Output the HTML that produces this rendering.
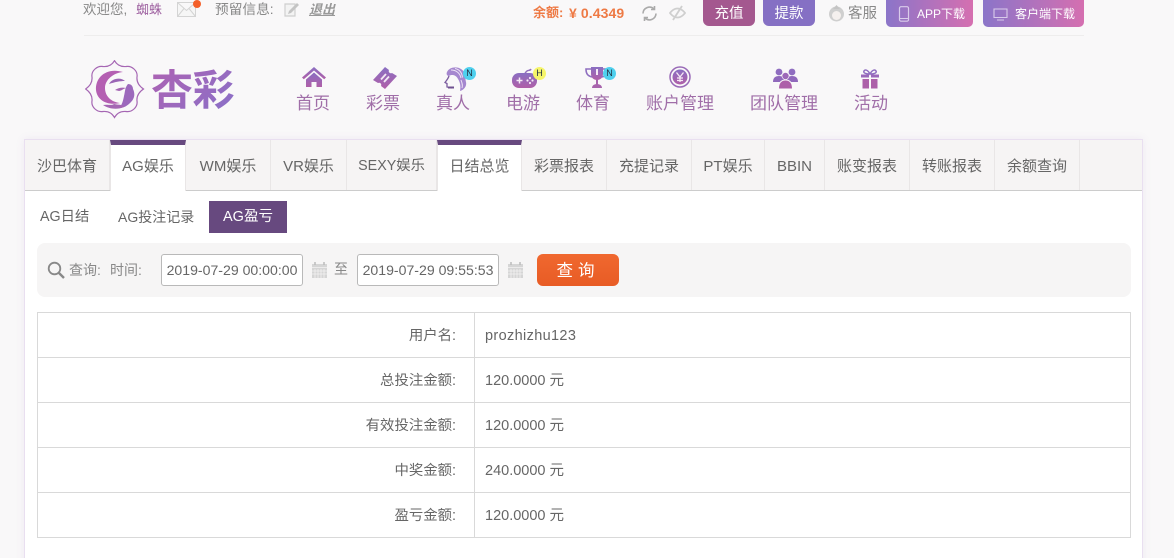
<!DOCTYPE html>
<html lang="zh"><head><meta charset="utf-8"><title>AG盈亏</title>
<style>
*{box-sizing:border-box}
html,body{margin:0;padding:0;width:1174px;height:558px;overflow:hidden}
body{background:#f9f8f9;font-family:"Liberation Sans","Noto Sans CJK SC",sans-serif;color:#666;font-size:14px}
#root{position:relative;width:1174px;height:558px;overflow:hidden;background:#f9f8f9}
.a{position:absolute;white-space:nowrap;line-height:1}
svg{position:absolute;display:block}
.btn{position:absolute;color:#fff;text-align:center;border-radius:5px;font-size:14.5px;white-space:nowrap}
.nav{position:absolute;top:95px;font-size:17px;line-height:18px;color:#a06ea8;text-align:center;white-space:nowrap;transform:translateX(-50%)}
.badge{position:absolute;width:13px;height:13px;border-radius:50%;font-size:9px;line-height:13px;text-align:center;color:#234}
#panel{position:absolute;left:24px;top:139px;width:1119px;height:430px;background:#fff;border:1px solid #e9dff0;box-shadow:0 0 8px rgba(160,120,190,.12)}
#tabs{position:absolute;left:25px;top:140px;width:1117px;height:51px;background:#f6f4f4;border-bottom:1px solid #ccc}
.tab{position:absolute;top:0;height:50px;border-right:1px solid #e9e6e6;line-height:53px;text-align:center;font-size:15px;color:#666;white-space:nowrap}
.tab.on{background:#fff;height:51px;border-top:5px solid #67497f;line-height:43px}
.tr{position:absolute;left:37px;width:1094px;height:45px;border:1px solid #d9d9d9;border-top:0;background:#fff}
.tr b{position:absolute;font-weight:normal;top:15px;line-height:16px;white-space:nowrap}
.tr .l{right:674px;color:#666;font-size:14.4px}
.tr .v{left:447px;color:#666;font-size:14.5px}
.tr i{position:absolute;left:436px;top:0;bottom:0;width:1px;background:#d9d9d9}
.inp{position:absolute;top:254px;width:142px;height:32px;border:1px solid #b9b9b9;border-radius:3px;background:#fff;line-height:31px;text-align:center;font-size:14.100px;color:#666;white-space:nowrap}
</style></head><body><div id="root">

<div class="a" style="left:83px;top:3px;font-size:13.500px;color:#888">欢迎您,</div>
<div class="a" style="left:136px;top:3px;font-size:13px;color:#9d5f9f">蜘蛛</div>
<svg style="left:177px;top:2px" width="20" height="16" viewBox="0 0 20 16"><path d="M.5.500h18v14H.5zM.5.500l9 8 9-8M.5 14.500l6.500-8M18.500 14.500l-6.500-8" fill="#f6f6f6" stroke="#d4d4d4"/></svg>
<div class="a" style="left:193px;top:0;width:8px;height:8px;border-radius:50%;background:#f4602a"></div>
<div class="a" style="left:215px;top:3px;font-size:13.700px;color:#888">预留信息:</div>
<svg style="left:284px;top:2px" width="16" height="15" viewBox="0 0 16 15"><path d="M1 2h10v12H1z" fill="#f3f3f3" stroke="#cfcfcf" stroke-width="1.200"/><path d="M5 9l8-8 2 2-8 8-3 1z" fill="#c4c4c4"/></svg>
<div class="a" style="left:309px;top:3px;font-size:13px;color:#999;font-style:italic;font-weight:bold;text-decoration:underline">退出</div>

<div class="a" style="left:533px;top:6px;font-size:13px;font-weight:bold;color:#ee7a45">余额:</div>
<div class="a" style="left:569px;top:6px;font-size:14px;font-weight:bold;letter-spacing:.1px;color:#ee7a45">¥ 0.4349</div>
<svg style="left:641px;top:5px" width="17" height="17" viewBox="0 0 17 17" fill="none" stroke="#aaa" stroke-width="1.600"><path d="M2 8.500a6.500 6.500 0 0 1 11-4.500M15 8.500a6.500 6.500 0 0 1-11 4.500"/><path d="M13.500 1v3.500H10M3.500 16v-3.500H7"/></svg>
<svg style="left:669px;top:5px" width="17" height="16" viewBox="0 0 17 16" fill="none" stroke="#cfcfcf" stroke-width="1.800"><path d="M1 8s3-4.500 7.500-4.500S16 8 16 8s-3 4.500-7.500 4.500S1 8 1 8z"/><path d="M13 1 4 15"/></svg>
<div class="btn" style="left:703px;top:0;width:52px;height:26px;line-height:28px;background:#a4588f;border-radius:0 0 6px 6px">充值</div>
<div class="btn" style="left:763px;top:0;width:52px;height:26px;line-height:28px;background:#8570c4;border-radius:0 0 6px 6px">提款</div>
<svg style="left:828px;top:4px" width="17" height="18" viewBox="0 0 17 18"><circle cx="8.500" cy="10" r="7.500" fill="#cfcfcf"/><circle cx="8.500" cy="11.500" r="4.500" fill="#f5f0ee"/><path d="M5 5l3.500-4L12 5z" fill="#c4c4c4"/></svg>
<div class="a" style="left:848px;top:7px;font-size:14.500px;color:#888">客服</div>
<div class="btn" style="left:886px;top:0;width:87px;height:27px;background:linear-gradient(90deg,#8b75c9,#d56fb0);border-radius:0 0 5px 5px;font-size:12px;line-height:29px;text-align:left;padding-left:31px">APP下载</div>
<svg style="left:898px;top:6px" width="12" height="16" viewBox="0 0 12 16"><rect x="1.500" y=".7" width="9" height="14.500" rx="1.500" fill="none" stroke="#d9cbea" stroke-width="1.200"/><path d="M2 12.500h8" stroke="#d9cbea"/></svg>
<div class="btn" style="left:983px;top:0;width:101px;height:27px;background:linear-gradient(90deg,#8b75c9,#d56fb0);border-radius:0 0 5px 5px;font-size:12px;line-height:29px;text-align:left;padding-left:32px">客户端下载</div>
<svg style="left:993px;top:8px" width="15" height="13" viewBox="0 0 15 13"><path d="M1 1h13v8.500H1zM4 12h7" fill="none" stroke="#d9cbea" stroke-width="1.100"/></svg>
<div class="a" style="left:84px;top:35px;width:1000px;height:1px;background:#eeeded"></div>

<!-- logo -->
<svg style="left:85px;top:60px" width="60" height="60" viewBox="0 0 60 60">
<defs><linearGradient id="g" x1="0" y1="0" x2="1" y2="1"><stop offset="0" stop-color="#b25fb0"/><stop offset="1" stop-color="#8b6cc4"/></linearGradient></defs>
<path d="M29.500 .7C32 5 36 7 41 6.500C47 5.500 53 11 52 17C51.500 22 54 26 58.500 29C54 32 51.500 36 52 41C53 47 47 52.500 41 51.500C36 51 32 53 29.500 57.500C27 53 23 51 18 51.500C12 52.500 6 47 7 41C7.500 36 5 32 .7 29C5 26 7.500 22 7 17C6 11 12 5.500 18 6.500C23 7 27 5 29.500 .7z" fill="none" stroke="#a566b3" stroke-width="1.200"/>
<path d="M38 12C22 7 10 17 11 30C12 40 22 46 35 43C26 42 20 36 20 28C20 20 28 13 38 12z" fill="#b45fb2"/>
<path d="M24 24C27 18 36 17 40 21C35 21 30 22 24 24z" fill="#9a65b5"/>
<path d="M43 24c3 0 5 2 5 5c2 4 2 9-2 13c-3 3-6 6-12 6c3-3 4-7 5-12c1-4 1-9 4-12z" fill="#9c68bc"/>
<path d="M30 30c3-2 7-3 11-2-3 1-5 3-7 3z" fill="#a566b3"/>
<path d="M18 45c5-1 8 1 11-1c4 1 8 0 10 3c-7 3-15 2-21-2z" fill="#a566b3"/>
</svg>
<div class="a" style="left:151px;top:64px;font-size:42px;line-height:48px;font-weight:700;letter-spacing:-.5px;font-family:'Noto Sans CJK SC',sans-serif;background:linear-gradient(135deg,#ae62b2,#8a70c8);-webkit-background-clip:text;background-clip:text;color:transparent">杏彩</div>

<!-- nav icons -->
<svg width="0" height="0"><defs><linearGradient id="n" x1="0" y1="0" x2="0" y2="1"><stop offset="0" stop-color="#8a6fc2"/><stop offset="1" stop-color="#b05fa8"/></linearGradient></defs></svg>
<svg style="left:302px;top:67px" width="24" height="20" viewBox="0 0 24 20"><path d="M12 0 0 10.500l1.800 1.800L12 3.500l10.200 8.800L24 10.500z" fill="url(#n)"/><path d="M4 12.500 12 5.500l8 7V20h-5.500v-5h-5v5H4z" fill="url(#n)"/></svg>
<svg style="left:373px;top:67px" width="24" height="22" viewBox="0 0 24 22"><path d="M0 13 12 0 16 3C15 5 17 7 19 6L24 9 12 22 8 19C9 17 7 15 5 16Z" fill="url(#n)"/><path d="M8 12.500l5-5.500M11 15l5-5.500" stroke="#f3e9f4" stroke-width="1.800"/></svg>
<svg style="left:441px;top:66px" width="27" height="26" viewBox="0 0 27 26"><path d="M6 6C8 1 16 0 20 3C25 6 24 12 25 16C26 20 23 24 19 25C20 20 19 16 17 13C15 9 11 8 8 10C6 10 5 8 6 6z" fill="#a587cf"/><path d="M10 4c5 0 9 3 10 8M14 2.500c5 1 7 5 7.500 9M20 14c1 3 2 5 1 8" fill="none" stroke="#ede3f5" stroke-width="1"/><path d="M8 10C7 13 5 15 4 16.500L6 17.500V21L11 22" fill="none" stroke="#7b5c9f" stroke-width="1.300"/><path d="M7 21.500h6" stroke="#6e5090" stroke-width="2"/></svg>
<div class="badge" style="left:463px;top:67px;background:#4fd0ee">N</div>
<svg style="left:512px;top:66px" width="26" height="23" viewBox="0 0 26 23"><path d="M13 7l2-2c1-1 3 0 4-2" fill="none" stroke="#9470bd" stroke-width="1.500"/><rect x="0" y="7" width="25" height="15" rx="7" fill="url(#n)"/><path d="M4.500 14.500h6M7.500 11.500v6" stroke="#f5eaf5" stroke-width="1.500"/><circle cx="18" cy="12" r="1.100" fill="#f5eaf5"/><circle cx="18" cy="17" r="1.100" fill="#f5eaf5"/><circle cx="15.500" cy="14.500" r="1.100" fill="#f5eaf5"/><circle cx="20.500" cy="14.500" r="1.100" fill="#f5eaf5"/></svg>
<div class="badge" style="left:533px;top:67px;background:#f6f56a">H</div>
<svg style="left:585px;top:66px" width="24" height="23" viewBox="0 0 24 23"><path d="M6 1h12v7c0 4-3 6-6 6s-6-2-6-6z" fill="url(#n)"/><path d="M6 3H1c0 5 2 7 6 8M18 3h5c0 5-2 7-6 8" fill="none" stroke="#8f6fc0" stroke-width="1.600"/><path d="M11 13h2v5h-2zM7 22c0-3 3-4 5-4s5 1 5 4z" fill="#a865ad"/><path d="M12 3v6" stroke="#f5eaf5" stroke-width="2"/></svg>
<div class="badge" style="left:603px;top:67px;background:#4fd0ee">N</div>
<svg style="left:669px;top:66px" width="22" height="22" viewBox="0 0 22 22"><circle cx="11" cy="11" r="10" fill="none" stroke="#9a6bb8" stroke-width="1.500"/><circle cx="11" cy="11" r="7.500" fill="url(#n)"/><path d="M7.500 6.500 11 11l3.500-4.500M11 11v5M8 12h6M8 14.500h6" fill="none" stroke="#f5eaf5" stroke-width="1.300"/></svg>
<svg style="left:773px;top:68px" width="25" height="21" viewBox="0 0 25 21"><circle cx="6" cy="4" r="3.400" fill="#8f6dc0"/><circle cx="19" cy="4" r="3.400" fill="#8f6dc0"/><path d="M0 14c0-4 2-6 6-6s6 2 6 6zM13 14c0-4 2-6 6-6s6 2 6 6z" fill="#9069bc"/><circle cx="12.500" cy="8" r="3.800" fill="#f9f8f9"/><circle cx="12.500" cy="8" r="3.200" fill="#9c68b8"/><path d="M5.500 21c0-6 2.500-9 7-9s7 3 7 9z" fill="#ad60a9" stroke="#f9f8f9"/></svg>
<svg style="left:860px;top:69px" width="20" height="20" viewBox="0 0 20 20"><path d="M10 5C8 1 5 0 4 2s2 3 6 3c4 0 7-1 6-3s-4-1-6 3z" fill="none" stroke="#8f6dc0" stroke-width="1.500"/><path d="M1 5.500h8v3H1zM11 5.500h8v3h-8z" fill="#9a69ba"/><path d="M2.500 10H9v9.500H2.500zM11 10h6.500v9.500H11z" fill="#ad60a9"/></svg>

<div class="nav" style="left:313px">首页</div>
<div class="nav" style="left:383px">彩票</div>
<div class="nav" style="left:453px">真人</div>
<div class="nav" style="left:523px">电游</div>
<div class="nav" style="left:593px">体育</div>
<div class="nav" style="left:680px">账户管理</div>
<div class="nav" style="left:784px">团队管理</div>
<div class="nav" style="left:871px">活动</div>

<!-- panel -->
<div id="panel"></div>
<div id="tabs">
<div class="tab" style="left:0;width:85px">沙巴体育</div>
<div class="tab on" style="left:85px;width:76px;border-left:1px solid #e9e6e6">AG娱乐</div>
<div class="tab" style="left:161px;width:85px">WM娱乐</div>
<div class="tab" style="left:246px;width:76px">VR娱乐</div>
<div class="tab" style="left:322px;width:90px;font-size:14.300px">SEXY娱乐</div>
<div class="tab on" style="left:412px;width:85px;border-left:1px solid #e9e6e6">日结总览</div>
<div class="tab" style="left:497px;width:85px">彩票报表</div>
<div class="tab" style="left:582px;width:85px">充提记录</div>
<div class="tab" style="left:667px;width:73px">PT娱乐</div>
<div class="tab" style="left:740px;width:60px">BBIN</div>
<div class="tab" style="left:800px;width:85px">账变报表</div>
<div class="tab" style="left:885px;width:85px">转账报表</div>
<div class="tab" style="left:970px;width:85px">余额查询</div>
</div>

<div class="a" style="left:40px;top:209px;font-size:14.300px;line-height:16px;color:#666">AG日结</div>
<div class="a" style="left:118px;top:209px;font-size:14px;line-height:16px;color:#666">AG投注记录</div>
<div class="a" style="left:209px;top:201px;width:78px;height:32px;background:#67497f;color:#fff;font-size:14.500px;line-height:33px;text-align:center">AG盈亏</div>

<div class="a" style="left:37px;top:243px;width:1094px;height:54px;background:#f6f5f5;border-radius:8px"></div>
<svg style="left:47px;top:261px" width="18" height="18" viewBox="0 0 18 18" fill="none" stroke="#888" stroke-width="1.800"><circle cx="7.500" cy="7.500" r="5.800"/><path d="M12 12l5 5" stroke-width="2.400"/></svg>
<div class="a" style="left:69px;top:263px;font-size:14px;color:#888">查询:</div>
<div class="a" style="left:110px;top:263px;font-size:14px;color:#888">时间:</div>
<div class="inp" style="left:161px">2019-07-29 00:00:00</div>
<svg style="left:312px;top:262px" width="15" height="16" viewBox="0 0 15 16"><path d="M0 2h15v14H0z" fill="#d5d5d5"/><path d="M0 5.500h15M3 7v9M6 7v9M9 7v9M12 7v9M0 9h15M0 12h15" stroke="#f3f2f2" stroke-width=".8"/><path d="M3 0v3M12 0v3" stroke="#bbb" stroke-width="1.500"/></svg>
<div class="a" style="left:334px;top:262px;font-size:14px;color:#888">至</div>
<div class="inp" style="left:357px">2019-07-29 09:55:53</div>
<svg style="left:508px;top:262px" width="15" height="16" viewBox="0 0 15 16"><path d="M0 2h15v14H0z" fill="#d5d5d5"/><path d="M0 5.500h15M3 7v9M6 7v9M9 7v9M12 7v9M0 9h15M0 12h15" stroke="#f3f2f2" stroke-width=".8"/><path d="M3 0v3M12 0v3" stroke="#bbb" stroke-width="1.500"/></svg>
<div class="a" style="left:537px;top:254px;width:82px;height:32px;border-radius:6px;background:linear-gradient(#f0682f,#e85c25);color:#fff;font-size:16.500px;line-height:34px;text-align:center;letter-spacing:5px">查询</div>

<div class="tr" style="top:312px;height:46px;border-top:1px solid #d9d9d9"><i></i><b class="l">用户名:</b><b class="v" style="letter-spacing:.35px">prozhizhu123</b></div>
<div class="tr" style="top:358px"><i></i><b class="l">总投注金额:</b><b class="v">120.0000 元</b></div>
<div class="tr" style="top:403px"><i></i><b class="l">有效投注金额:</b><b class="v">120.0000 元</b></div>
<div class="tr" style="top:448px"><i></i><b class="l">中奖金额:</b><b class="v">240.0000 元</b></div>
<div class="tr" style="top:493px"><i></i><b class="l">盈亏金额:</b><b class="v">120.0000 元</b></div>
</div></body></html>
